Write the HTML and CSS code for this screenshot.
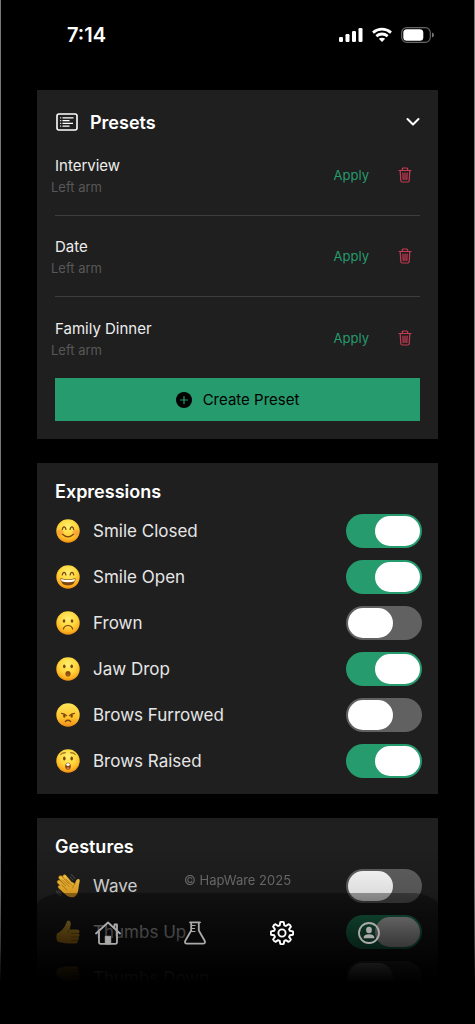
FILE: index.html
```html
<!DOCTYPE html>
<html lang="en">
<head>
<meta charset="utf-8">
<meta name="viewport" content="width=device-width, initial-scale=1">
<title>HapWare Settings</title>
<link rel="stylesheet" href="styles.css">
</head>
<body>
<svg class="defs" aria-hidden="true">
  <defs>
    <radialGradient id="face" cx="50%" cy="32%" r="68%">
      <stop offset="0" stop-color="#fff071"/>
      <stop offset=".5" stop-color="#ffd83e"/>
      <stop offset=".8" stop-color="#fdb623"/>
      <stop offset="1" stop-color="#ee8b12"/>
    </radialGradient>
    <linearGradient id="angry" x1="0" y1="0" x2="0" y2="1">
      <stop offset="0" stop-color="#ffe55a"/>
      <stop offset=".6" stop-color="#ffc42c"/>
      <stop offset="1" stop-color="#f08a18"/>
    </linearGradient>
    <linearGradient id="skin" gradientUnits="userSpaceOnUse" x1="0" y1="0" x2="0" y2="24">
      <stop offset="0" stop-color="#ffd24a"/>
      <stop offset="1" stop-color="#f2a51d"/>
    </linearGradient>
    <symbol id="trash" viewBox="0 0 14 16">
      <path d="M1 3.500H13M4.300 3.300V2Q4.300 1 5.300 1H8.700Q9.700 1 9.700 2V3.300M2.200 3.700 2.800 13.500Q2.900 15 4.200 15H9.800Q11.100 15 11.200 13.500L11.800 3.700M4.900 6 5.200 12.500M7 6V12.500M9.100 6 8.800 12.500" fill="none" stroke="currentColor" stroke-width="1.200" stroke-linecap="round"/>
    </symbol>
    <symbol id="thumb" viewBox="0 0 24 24">
      <path d="M1 13.500Q4 12 6.500 9.500 9.500 6 10.500 2.500 11 .2 12.700.4 15.300.9 14.700 5L13.700 9.500h7.600q2.200.2 2.200 2 0 1.300-1.300 1.800 1.600.6 1.300 2.200-.3 1.400-1.600 1.600 1.300.7.900 2-.4 1.300-1.700 1.400.9.700.5 1.800-.5 1.200-2.200 1.200h-6Q8 23.500 5.500 22.500 2 22.500 1 20.500-.2 17 1 13.500Z" fill="url(#skin)"/>
      <path d="M15.500 13.300h6M15.500 17h5.500M15.500 20.500h4.500M13.700 9.500Q12 10.500 11.800 12" fill="none" stroke="#b97a10" stroke-width="1" stroke-linecap="round"/>
    </symbol>
  </defs>
</svg>

<div class="screen">
  <header class="status">
    <time class="clock">7:14</time>
    <div class="indicators">
      <svg width="24" height="16" viewBox="0 0 24 16" fill="#fff" aria-label="Signal"><rect x="0" y="10" width="4" height="5" rx="1.200"/><rect x="6.500" y="7" width="4" height="8" rx="1.200"/><rect x="13" y="4" width="4" height="11" rx="1.200"/><rect x="19.500" y="1" width="4" height="14" rx="1.200"/></svg>
      <svg width="20" height="16" viewBox="0 0 20 16" fill="none" stroke="#fff" stroke-width="2.800" aria-label="Wi-Fi"><path d="M1 5.600Q5 2.200 10 2.200T19 5.600M4.300 9.100Q7 7 10 7t5.700 2.100"/><path d="M6.800 11.800Q8.200 10.800 10 10.800t3.200 1L10 15Z" fill="#fff" stroke="none"/></svg>
      <svg width="33" height="16" viewBox="0 0 33 16" aria-label="Battery"><rect x=".7" y=".7" width="28.600" height="14.600" rx="5" fill="none" stroke="#666" stroke-width="1.200"/><rect x="2.300" y="2.300" width="20" height="11.400" rx="3.500" fill="#fff"/><path d="M31 5.500Q33 6.200 33 8t-2 2.500Z" fill="#777"/></svg>
    </div>
  </header>

  <main class="cards">
    <section class="card presets">
      <h2 class="presets-head">
        <button class="collapse" type="button" aria-expanded="true">
          <svg width="22" height="18" viewBox="0 0 22 18" fill="none" stroke="#fff" aria-hidden="true"><rect x="1" y="1" width="20" height="16" rx="2" stroke-width="1.600"/><path d="M4.200 4.800h1M4.200 7.600h1M4.200 10.400h1M4.200 13.200h1M6.500 4.800h11M6.500 7.600h7M6.500 10.400h10.500M6.500 13.200h7" stroke-width="1.200"/></svg>
          <span class="collapse-title">Presets</span>
          <svg width="14" height="10" viewBox="0 0 14 10" fill="none" stroke="#fff" stroke-width="2" stroke-linecap="round" stroke-linejoin="round" aria-hidden="true"><path d="M1.500 2 7 7.500 12.500 2"/></svg>
        </button>
      </h2>
      <ul class="preset-list">
        <li class="preset">
          <div class="preset-text"><span class="preset-name">Interview</span><span class="preset-arm">Left arm</span></div>
          <button class="apply" type="button">Apply</button>
          <button class="delete" type="button" aria-label="Delete Interview"><svg width="14" height="16"><use href="#trash"/></svg></button>
        </li>
        <li class="preset">
          <div class="preset-text"><span class="preset-name">Date</span><span class="preset-arm">Left arm</span></div>
          <button class="apply" type="button">Apply</button>
          <button class="delete" type="button" aria-label="Delete Date"><svg width="14" height="16"><use href="#trash"/></svg></button>
        </li>
        <li class="preset">
          <div class="preset-text"><span class="preset-name">Family Dinner</span><span class="preset-arm">Left arm</span></div>
          <button class="apply" type="button">Apply</button>
          <button class="delete" type="button" aria-label="Delete Family Dinner"><svg width="14" height="16"><use href="#trash"/></svg></button>
        </li>
      </ul>
      <button class="create" type="button">
        <svg width="16" height="16" viewBox="0 0 16 16" aria-hidden="true"><circle cx="8" cy="8" r="8"/><path d="M8 4.500v7M4.500 8h7" stroke="#259b6e" stroke-width="1.200" stroke-linecap="round"/></svg>
        Create Preset
      </button>
    </section>

    <section class="card">
      <h2 class="title">Expressions</h2>
      <div class="options">
        <label class="option">
          <svg class="emoji" viewBox="0 0 24 24" aria-hidden="true"><circle cx="12" cy="12" r="11.700" fill="url(#face)"/><circle cx="4.500" cy="13.500" r="3" fill="#f5713a" opacity=".4"/><circle cx="19.500" cy="13.500" r="3" fill="#f5713a" opacity=".4"/><path d="M6.300 10.500Q6.800 7.800 8.100 7.800T9.900 10.500M14.100 10.500Q14.600 7.800 15.900 7.800T17.700 10.500M6.500 15.300Q12 20.500 17.500 15.300" fill="none" stroke="#7a4310" stroke-width="1.200" stroke-linecap="round"/></svg>
          <span class="option-name">Smile Closed</span><input class="toggle" type="checkbox" role="switch" checked>
        </label>
        <label class="option">
          <svg class="emoji" viewBox="0 0 24 24" aria-hidden="true"><circle cx="12" cy="12" r="11.700" fill="url(#face)"/><path d="M6.300 10Q6.800 7.300 8.100 7.300T9.900 10M14.100 10Q14.600 7.300 15.900 7.300T17.700 10" fill="none" stroke="#7a4310" stroke-width="1.200" stroke-linecap="round"/><path d="M4.300 13.300Q12 15.500 19.700 13.300 19.300 20.500 12 20.500T4.300 13.300Z" fill="#7d4612"/><path d="M5 14Q12 16 19 14l-.5 2.300Q12 18.300 5.500 16.300Z" fill="#fff"/></svg>
          <span class="option-name">Smile Open</span><input class="toggle" type="checkbox" role="switch" checked>
        </label>
        <label class="option">
          <svg class="emoji" viewBox="0 0 24 24" aria-hidden="true"><circle cx="12" cy="12" r="11.700" fill="url(#face)"/><ellipse cx="8" cy="10" rx="1.300" ry="1.700" fill="#7a4310"/><ellipse cx="16" cy="10" rx="1.300" ry="1.700" fill="#7a4310"/><path d="M7.300 18Q8.500 14.500 12 14.500T16.700 18" fill="none" stroke="#7a4310" stroke-width="1.200" stroke-linecap="round"/></svg>
          <span class="option-name">Frown</span><input class="toggle" type="checkbox" role="switch">
        </label>
        <label class="option">
          <svg class="emoji" viewBox="0 0 24 24" aria-hidden="true"><circle cx="12" cy="12" r="11.700" fill="url(#face)"/><ellipse cx="8.300" cy="9.300" rx="1.300" ry="1.900" fill="#7a4310"/><ellipse cx="15.700" cy="9.300" rx="1.300" ry="1.900" fill="#7a4310"/><ellipse cx="12" cy="16.800" rx="2.600" ry="2.800" fill="#8a4a14"/><ellipse cx="12" cy="18" rx="1.500" ry="1.200" fill="#ad5a1c"/></svg>
          <span class="option-name">Jaw Drop</span><input class="toggle" type="checkbox" role="switch" checked>
        </label>
        <label class="option">
          <svg class="emoji" viewBox="0 0 24 24" aria-hidden="true"><circle cx="12" cy="12" r="11.700" fill="url(#angry)"/><ellipse cx="8.300" cy="13" rx="1.200" ry="1.800" fill="#7a4310"/><ellipse cx="15.700" cy="13" rx="1.200" ry="1.800" fill="#7a4310"/><path d="M5.500 10.300Q8.500 10.500 10.500 12.700M18.500 10.300Q15.500 10.500 13.500 12.700M9.300 18.500Q12 16 14.700 18.500" fill="none" stroke="#7a4310" stroke-width="1.200" stroke-linecap="round"/></svg>
          <span class="option-name">Brows Furrowed</span><input class="toggle" type="checkbox" role="switch">
        </label>
        <label class="option">
          <svg class="emoji" viewBox="0 0 24 24" aria-hidden="true"><circle cx="12" cy="12" r="11.700" fill="url(#face)"/><ellipse cx="8.300" cy="9.500" rx="1.300" ry="2" fill="#7a4310"/><ellipse cx="15.700" cy="9.500" rx="1.300" ry="2" fill="#7a4310"/><path d="M4.800 5.300Q6.500 3.400 9.300 3.700M19.200 5.300Q17.500 3.400 14.700 3.700" fill="none" stroke="#7a4310" stroke-width="1" stroke-linecap="round"/><ellipse cx="12" cy="17.300" rx="2.800" ry="3.500" fill="#8a4a14"/><ellipse cx="12" cy="15.600" rx="1.800" ry="1.300" fill="#fff"/><ellipse cx="12" cy="19.200" rx="1.500" ry="1" fill="#e0784a"/></svg>
          <span class="option-name">Brows Raised</span><input class="toggle" type="checkbox" role="switch" checked>
        </label>
      </div>
    </section>

    <section class="card">
      <h2 class="title">Gestures</h2>
      <div class="options">
        <label class="option">
          <svg class="emoji" viewBox="0 0 24 24" aria-hidden="true"><path d="M4.500 3.500 13 13M8.500 2.500 15.500 11M3 8l9 8.500M4 13l8 7" fill="none" stroke="#b97a10" stroke-width="4.200" stroke-linecap="round"/><path d="M4.500 3.500 13 13M8.700 2.500 16 11M3 8l9 8.500M4 13l8 7" fill="none" stroke="url(#skin)" stroke-width="3" stroke-linecap="round"/><path d="M9.500 17Q8 14 11 11l5-3 3 1.700q.7-2.800 1.700-3.900 1.200-1.300 2.400-.6.900.7.500 2.500Q22.700 12 22.300 16q-.5 4.500-3.300 6.500-4 2-7.500-.7L6 17Z" fill="url(#skin)"/><path d="m6.500 6 6.500 6.500M5.500 10.800 11 16M10 5l5.500 6M19 9.700Q16.500 11.500 16.800 14" fill="none" stroke="#b97a10" stroke-width=".8" stroke-linecap="round"/><path d="M15 .7q3 1 4 4M14 3q2 1 2.800 3M.5 17q1 4 4.500 5M2.500 17q1 2.200 3 3" fill="none" stroke="#555" stroke-width="1" stroke-linecap="round"/></svg>
          <span class="option-name">Wave</span><input class="toggle" type="checkbox" role="switch">
        </label>
        <label class="option">
          <svg class="emoji" viewBox="0 0 24 24" aria-hidden="true"><use href="#thumb"/></svg>
          <span class="option-name">Thumbs Up</span><input class="toggle" type="checkbox" role="switch" checked>
        </label>
        <label class="option">
          <svg class="emoji" viewBox="0 0 24 24" aria-hidden="true"><use href="#thumb" transform="matrix(1 0 0 -1 0 24)"/></svg>
          <span class="option-name">Thumbs Down</span><input class="toggle" type="checkbox" role="switch">
        </label>
      </div>
    </section>
  </main>

  <footer class="dock">
    <p class="copyright">© HapWare 2025</p>
    <nav class="tabs" aria-label="Main">
      <a class="tab" href="#home" aria-label="Home"><svg width="26" height="24" viewBox="0 0 26 24" fill="none" stroke="currentColor" stroke-width="1.800" stroke-linejoin="round" stroke-linecap="round"><path d="M1 12.500 13 1.500l12 11M4 10.500V21q0 1.800 1.800 1.800h14.400Q22 22.800 22 21V10.500M19.500 7V3.500H22v6"/><path d="M10.300 22.500V15.300h5.400v7.200Z" fill="currentColor" stroke-width="1"/></svg></a>
      <a class="tab" href="#lab" aria-label="Lab"><svg width="22" height="24" viewBox="0 0 22 24" fill="none" stroke="currentColor" stroke-width="1.800" stroke-linejoin="round" stroke-linecap="round"><path d="M6 1.300h10M7.200 1.500V9.500L1.200 20Q.4 22.700 3 22.700H19q2.600 0 1.800-2.700L14.800 9.500V1.500"/><path d="M7.500 4.500h3.500M7.500 7.500h3M7.500 10.500h3.500" stroke-width="1.200"/></svg></a>
      <a class="tab current" href="#settings" aria-label="Settings" aria-current="page"><svg width="24" height="24" viewBox="0 0 24 24" fill="none" stroke="currentColor" stroke-width="1.900" stroke-linejoin="round"><path d="M10.300 1.200Q12 .6 13.700 1.200L14.300 4.300 15.900 5 18.500 3.200Q20.200 3.800 20.900 5.600L19.100 8.200 19.800 9.800 22.900 10.400Q23.400 12 22.900 13.700L19.800 14.300 19.100 15.900 20.900 18.500Q20.200 20.200 18.500 20.900L15.900 19.100 14.300 19.800 13.700 22.900Q12 23.400 10.300 22.900L9.700 19.800 8.100 19.100 5.500 20.900Q3.800 20.200 3.100 18.500L4.900 15.900 4.200 14.300 1.100 13.700Q.6 12 1.100 10.400L4.200 9.800 4.900 8.200 3.100 5.600Q3.800 3.800 5.500 3.200L8.100 5 9.700 4.300Z"/><circle cx="12" cy="12" r="3.600"/></svg></a>
      <a class="tab" href="#profile" aria-label="Profile"><svg width="22" height="22" viewBox="0 0 22 22" fill="currentColor"><circle cx="11" cy="11" r="10" fill="none" stroke="currentColor" stroke-width="1.800"/><ellipse cx="11" cy="8" rx="2.900" ry="3.300"/><path d="M5.500 16.300q0-4 5.500-4t5.500 4Z"/></svg></a>
    </nav>
    <div class="home-area"></div>
  </footer>
</div>
</body>
</html>
```
FILE: styles.css
```css
* {
  box-sizing: border-box;
}

body {
  margin: 0;
  background: #000;
  color: #fff;
  font-family: Inter, "Liberation Sans", sans-serif;
}

h2,
p,
ul {
  margin: 0;
  padding: 0;
}

button {
  padding: 0;
  border: 0;
  background: none;
  color: inherit;
  font: inherit;
  cursor: pointer;
}

svg {
  display: block;
  flex: none;
}

.defs {
  position: absolute;
  width: 0;
  height: 0;
}

.screen {
  min-height: 100vh;
  border: solid #777;
  border-width: 0 1px;
}

.status {
  display: flex;
  align-items: center;
  justify-content: space-between;
  height: 70px;
  padding: 0 40px 0 66px;
}

.clock {
  font-size: 20px;
  font-weight: 600;
}

.indicators {
  display: flex;
  align-items: center;
  gap: 9px;
}

.cards {
  display: grid;
  gap: 24px;
  padding: 20px 36px 0;
}

.card {
  padding: 18px 16px 16px 18px;
  background: #1f1f1f;
}

.presets {
  padding: 19px 18px 18px;
}

.collapse {
  display: flex;
  align-items: center;
  gap: 12px;
  width: 100%;
  height: 26px;
  padding-left: 1px;
  text-align: left;
}

.collapse-title {
  flex: 1;
  font-size: 18px;
  font-weight: 600;
}

.preset-list {
  list-style: none;
}

.preset {
  display: flex;
  align-items: center;
  height: 81px;
  border-bottom: 1px solid #3d3d3d;
}

.preset:last-child {
  border-bottom: 0;
}

.preset-text {
  display: grid;
  flex: 1;
}

.preset-name {
  font-size: 15px;
  line-height: 24px;
  color: #eee;
}

.preset-arm {
  margin-left: -4px;
  font-size: 13px;
  line-height: 18px;
  color: #575757;
}

.apply {
  font-size: 13px;
  color: #259b6e;
}

.delete {
  margin: 0 8px 0 29px;
  color: #c43b53;
}

.create {
  display: flex;
  align-items: center;
  justify-content: center;
  gap: 11px;
  width: 100%;
  height: 43px;
  background: #259b6e;
  color: #000;
  font-size: 15px;
}

.title {
  font-size: 18px;
  font-weight: 600;
  line-height: 22px;
}

.options {
  display: grid;
  gap: 12px;
  padding-top: 11px;
}

.option {
  display: flex;
  align-items: center;
  gap: 13px;
}

.emoji {
  width: 24px;
  height: 24px;
  margin-left: 1px;
}

.option-name {
  flex: 1;
  font-size: 17px;
  color: #e6e6e6;
}

.toggle {
  appearance: none;
  display: flex;
  width: 76px;
  height: 34px;
  margin: 0;
  padding: 2px;
  border-radius: 17px;
  background: #616161;
}

.toggle::before {
  content: "";
  width: 45px;
  height: 30px;
  border-radius: 15px;
  background: #fff;
}

.toggle:checked {
  justify-content: flex-end;
  background: #259b6e;
}

.dock {
  position: fixed;
  inset: auto 0 0;
  padding: 20px 24px 0;
  background: linear-gradient(rgb(0 0 0 / 0), rgb(0 0 0 / .13) 42px, rgb(0 0 0 / .35) 68px, rgb(0 0 0 / .55) 95px, rgb(0 0 0 / .8) 113px, #000 133px);
}

.copyright {
  font-size: 13px;
  line-height: 20px;
  text-align: center;
  color: #666;
}

.tabs {
  display: grid;
  grid-template-columns: repeat(4, 1fr);
  height: 90px;
  margin-top: 3px;
  padding: 0 39px 10px 41px;
  border-radius: 38px 38px 0 0;
  background: linear-gradient(rgb(0 0 0 / .35), rgb(0 0 0 / .5) 60%, rgb(0 0 0 / .6));
}

.tab {
  display: grid;
  place-items: center;
  color: #aaa;
}

.tab.current {
  color: #fff;
}

.home-area {
  height: 41px;
}
```
